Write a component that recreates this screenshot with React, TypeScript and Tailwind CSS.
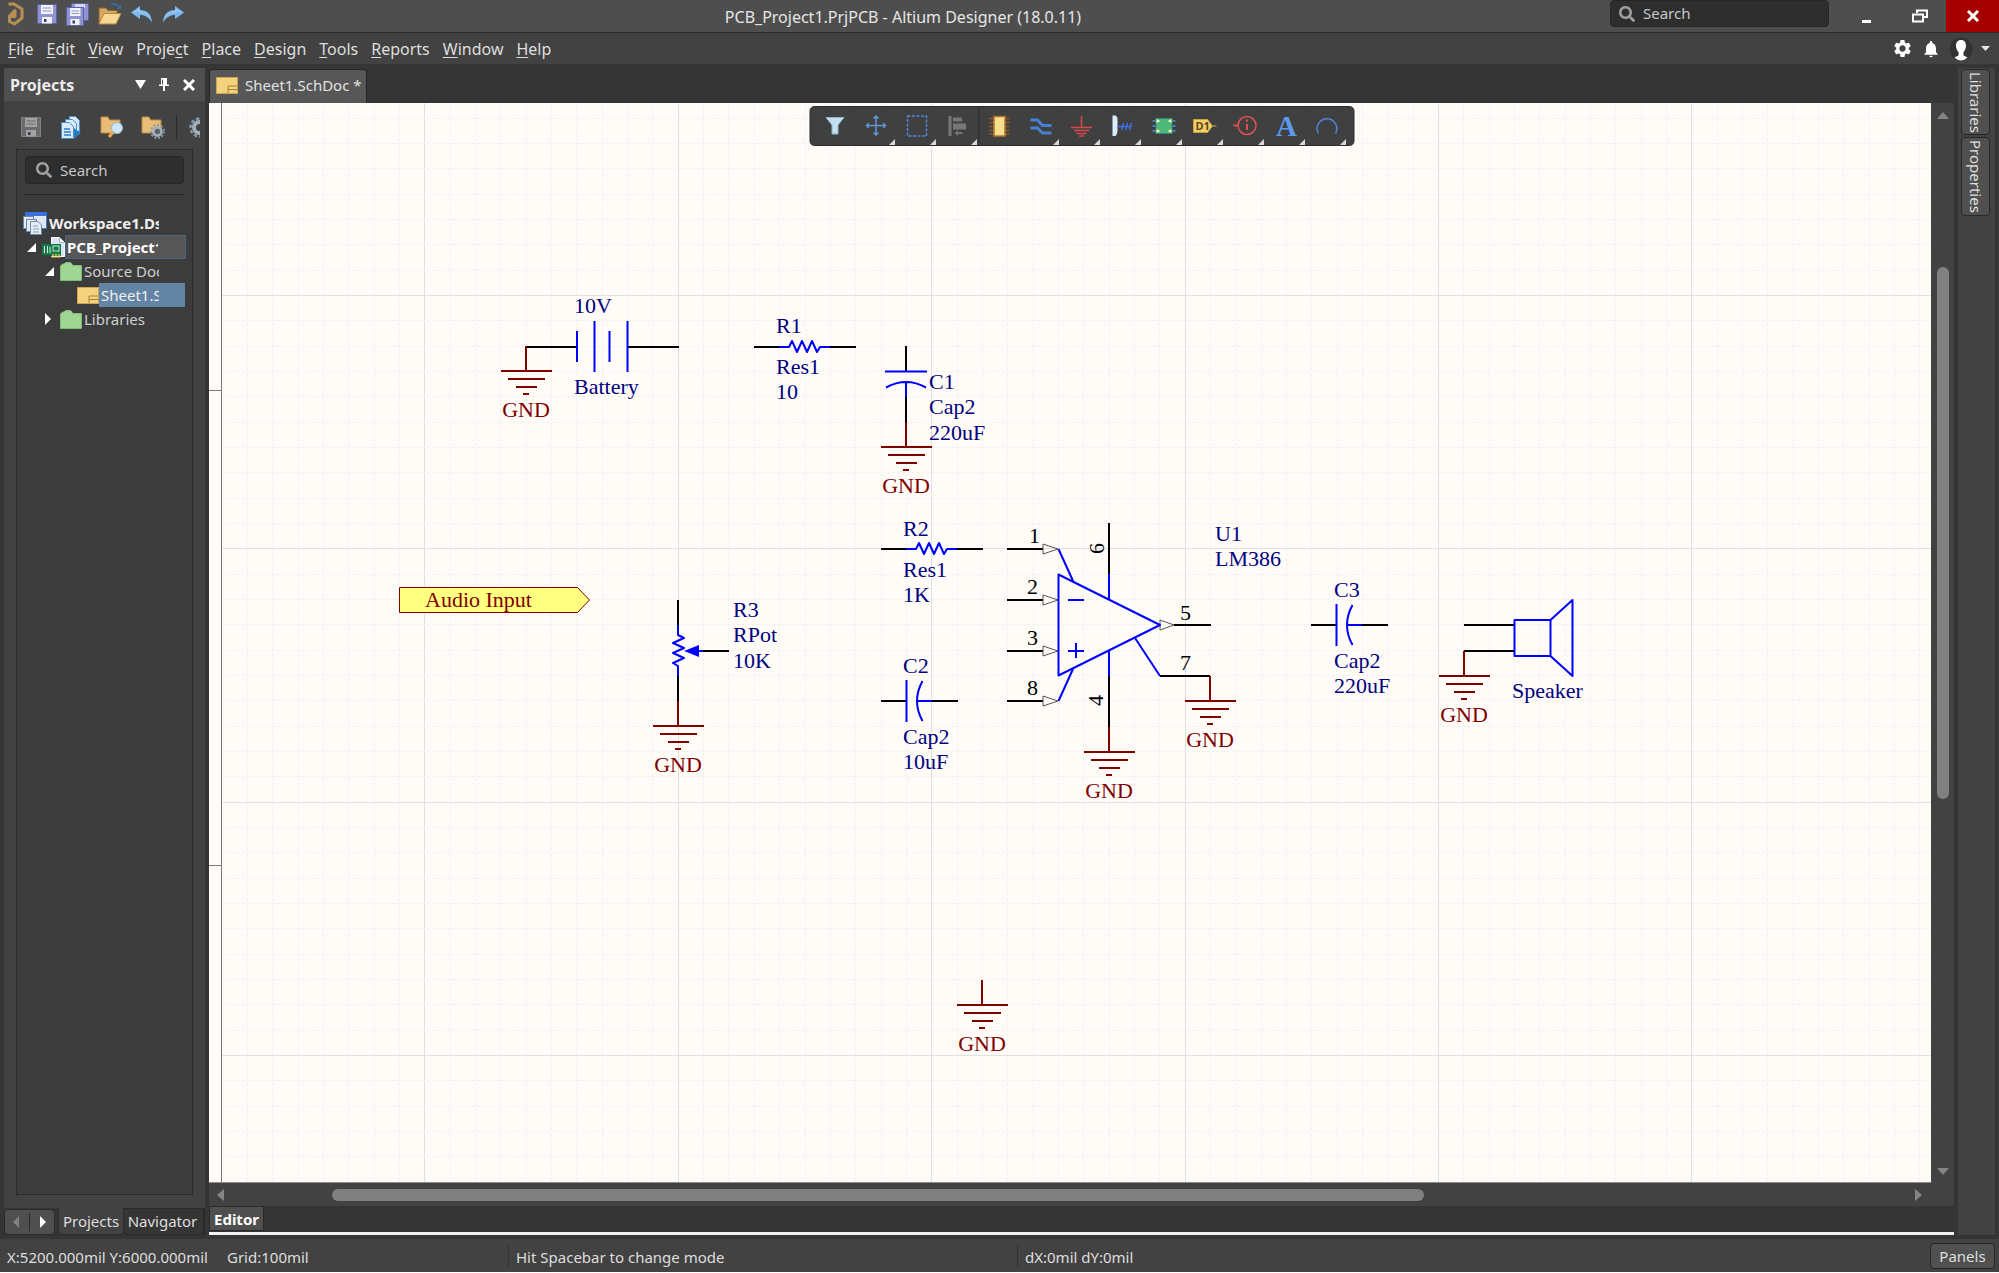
import React from "react";
import { FaSearch } from "react-icons/fa";
import { MdSettings, MdNotifications } from "react-icons/md";

const UNIT = 25.34;
const gx = (k: number) => 678.3 + UNIT * k;
const gy = (k: number) => 295.4 + UNIT * k;

const BLUE = "#0000ff";
const MAROON = "#800000";
const NAVY = "#000080";

/* ---------- small icons ---------- */

function AltiumLogo() {
  return (
    <svg width="16" height="24" viewBox="0 0 16 24" fill="none" stroke="#b78f54" strokeWidth="3">
      <path d="M0.5 2H6l8 5v9l-7.500 6L1.500 19.500V14L7 8.500v6H1.500" strokeLinejoin="round" />
    </svg>
  );
}

function Floppy({ light = "#f2f2fb", body = "#8f93cf", edge = "#5c62a8" }: { light?: string; body?: string; edge?: string }) {
  return (
    <svg width="20" height="20" viewBox="0 0 20 20">
      <rect x="0.5" y="0.5" width="19" height="19" fill={body} stroke={edge} />
      <rect x="4" y="1" width="12" height="9" fill={light} />
      <path d="M5.500 4h9M5.500 7h9" stroke={body} strokeWidth="1" />
      <rect x="5" y="13" width="10" height="6.5" fill={light} />
      <rect x="7" y="15" width="2.5" height="3" fill="#3d3d50" />
    </svg>
  );
}

function FloppyStack() {
  return (
    <svg width="23" height="23" viewBox="0 0 23 23">
      <rect x="5.5" y="0.5" width="17" height="17" fill="#8f93cf" stroke="#5c62a8" />
      <rect x="9" y="1" width="10" height="4" fill="#d5d7f2" />
      <rect x="0.5" y="4.5" width="17" height="18" fill="#8f93cf" stroke="#5c62a8" />
      <rect x="4" y="5" width="10.5" height="8" fill="#f2f2fb" />
      <path d="M5.500 8h7.500M5.500 10.500h7.500" stroke="#8f93cf" />
      <rect x="4.5" y="16" width="9" height="6" fill="#f2f2fb" />
      <rect x="6.5" y="17.5" width="2.5" height="3" fill="#3d3d50" />
    </svg>
  );
}

function OpenFolder() {
  return (
    <svg width="24" height="22" viewBox="0 0 24 22">
      <path d="M1 21V5h7l2 2.500h9V11" fill="#d9a860" stroke="#8a6430" />
      <path d="M1 21 6 10.500h17L18 21z" fill="#f7d894" stroke="#b58744" />
      <path d="M13 1.500c4-1 7 0 8.500 3.500" fill="none" stroke="#3c6f9e" strokeWidth="1.5" />
      <path d="M23 2v4h-4.500z" fill="#3c6f9e" />
    </svg>
  );
}

function CurvedArrow({ flip = false }: { flip?: boolean }) {
  return (
    <svg width="22" height="17" viewBox="0 0 22 17">
      <g transform={flip ? "matrix(-1 0 0 1 22 0)" : undefined}>
        <path d="M0 6.500 9 0v4c7 0 11.500 4 12 12.500C18 11.500 14 9 9 9v4z" fill="#7db7f0" />
        <path d="M3 6.500 8 3v3c5 0 9 2 11 5" fill="none" stroke="#a9d2fb" strokeWidth="1" />
      </g>
    </svg>
  );
}

function SheetIcon() {
  return (
    <svg className="shrink-0" width="22" height="17" viewBox="0 0 22 17">
      <rect x="0.5" y="0.5" width="21" height="16" fill="#f3d37d" stroke="#cfa450" />
      <path d="M12 16V9h9.500M12 12.500h9.500" fill="none" stroke="#a5823c" />
    </svg>
  );
}

function GreenFolder() {
  return (
    <svg className="shrink-0" width="22" height="19" viewBox="0 0 22 19">
      <path d="M0.5 18.500V4l2-2H4l1.500-1.500h5L13 3.500h8.500v15z" fill="#9fd694" stroke="#80bb78" />
    </svg>
  );
}

function WorkspaceIcon() {
  return (
    <svg className="shrink-0" width="24" height="24" viewBox="0 0 24 24">
      <rect x="2.5" y="1.5" width="21" height="16" fill="#dfe7f6" stroke="#4a73c8" />
      <rect x="2" y="1" width="22" height="4" fill="#3b6fe0" />
      <g fill="#e6ecf4" stroke="#6c87a8">
        <rect x="0.5" y="5.5" width="10" height="12" />
        <rect x="3.5" y="8.5" width="10" height="12" />
        <path d="M7.500 10.500H15l3.500 3.500v9.500h-11z" />
      </g>
      <path d="M10 15h5M10 18h6M10 21h6" stroke="#8ba3c4" />
    </svg>
  );
}

function PcbIcon() {
  return (
    <svg className="shrink-0" width="23" height="24" viewBox="0 0 23 24">
      <path d="M9.500 2.500h8l5 5v14h-13z" fill="#dde5f3" stroke="#f6f8fc" />
      <path d="M17.500 2.500v5h5" fill="#fff" stroke="#9fb2d4" />
      <path d="M0 9h19v12H9v-1H0z" fill="#127a48" />
      <path d="M2.500 11v7M5.500 11v7M8 12v6" stroke="#d8efe2" />
      <rect x="11" y="11" width="6" height="5" fill="none" stroke="#bfe6cf" />
      <path d="M11 19v4M14 19v4M17 19v4" stroke="#e8c04a" strokeWidth="1.5" />
    </svg>
  );
}

function DocsIcon() {
  return (
    <svg width="21" height="23" viewBox="0 0 21 23">
      <g fill="#dbeaf9" stroke="#4a90cc">
        <path d="M8.500 0.500h6l4 4v11h-10z" />
        <path d="M4.500 3.500h7l4 4v11h-11z" />
        <path d="M0.500 6.500h8l4 4v12h-12z" />
      </g>
      <path d="M3 13h6M3 16h7M3 19h7" stroke="#2f7fc4" strokeWidth="1.5" />
      <path d="m13 12 7 5-7 6z" fill="#2b7bc4" />
    </svg>
  );
}

function FolderSearch() {
  return (
    <svg width="24" height="22" viewBox="0 0 24 22">
      <path d="M1 17V1h7l1.500 3H20v13z" fill="#e9bd77" stroke="#b98a45" />
      <path d="m14 15-5 6" stroke="#e8a94f" strokeWidth="3" />
      <circle cx="17" cy="12" r="5.5" fill="#cfe6f5" stroke="#8fb8d4" />
    </svg>
  );
}

function FolderGear() {
  return (
    <svg width="24" height="23" viewBox="0 0 24 23">
      <path d="M1 17V1h7l1.500 3H20v13z" fill="#e9bd77" stroke="#b98a45" />
      <circle cx="16.5" cy="15.5" r="6.5" fill="none" stroke="#8c9aa5" strokeWidth="2" strokeDasharray="2 1.7" />
      <circle cx="16.5" cy="15.5" r="4" fill="#5d6468" stroke="#a5b3bd" strokeWidth="2.5" />
    </svg>
  );
}

function HalfGear() {
  return (
    <svg width="11" height="21" viewBox="0 0 11 21">
      <circle cx="10.5" cy="10.5" r="9" fill="none" stroke="#8796a1" strokeWidth="2.5" strokeDasharray="3.5 2" />
      <circle cx="10.5" cy="10.5" r="5.5" fill="#424242" stroke="#9fb0bb" strokeWidth="4" />
    </svg>
  );
}

/* ---------- top bars ---------- */

const iconBtn = "flex items-center justify-center";

function TitleBar() {
  return (
    <header className="flex h-[33px] shrink-0 border-b border-[#2a2a2a] bg-[#4e4e4e]">
      <div className="flex items-center gap-[9px] pb-1 pl-2">
        <button aria-label="Altium" className={iconBtn + " mr-1"}><AltiumLogo /></button>
        <button aria-label="Save" className={iconBtn}><Floppy /></button>
        <button aria-label="Save all" className={iconBtn}><FloppyStack /></button>
        <button aria-label="Open" className={iconBtn}><OpenFolder /></button>
        <button aria-label="Undo" className={iconBtn}><CurvedArrow /></button>
        <button aria-label="Redo" className={iconBtn}><CurvedArrow flip /></button>
      </div>
      <h1 className="flex-1 self-center pl-3 pt-0.5 text-center text-base leading-5 text-[#e6e6e6]">
        PCB_Project1.PrjPCB - Altium Designer (18.0.11)
      </h1>
      <div className="flex">
        <label className="flex h-[27px] w-[219px] items-center gap-2 rounded-[4px] border border-[#262626] bg-[#2e2e2e] pl-2">
          <FaSearch className="size-4 text-[#a0a0a0]" />
          <input aria-label="Search" placeholder="Search" className="w-36 bg-transparent text-[15px] text-[#dcdcdc] outline-none placeholder:text-[#c8c8c8]" />
        </label>
        <button aria-label="Minimize" className="ml-2.5 flex w-[54px] items-end justify-center pb-[9px]">
          <span className="h-[3px] w-[9px] bg-white" />
        </button>
        <button aria-label="Restore" className={iconBtn + " w-[53px]"}>
          <svg width="16" height="14" viewBox="0 0 16 14" fill="none" stroke="#fff" strokeWidth="2">
            <path d="M5 4V1.500h10V8h-4" />
            <rect x="1" y="5.5" width="10" height="7" />
          </svg>
        </button>
        <button aria-label="Close" className={iconBtn + " w-[53px] bg-[#a60000]"}>
          <svg width="12" height="12" viewBox="0 0 12 12" stroke="#fff" strokeWidth="3">
            <path d="m1 1 10 10M11 1 1 11" />
          </svg>
        </button>
      </div>
    </header>
  );
}

const MENUS: [string, string, string][] = [
  ["", "F", "ile"], ["", "E", "dit"], ["", "V", "iew"], ["Proje", "c", "t"], ["", "P", "lace"],
  ["", "D", "esign"], ["", "T", "ools"], ["", "R", "eports"], ["", "W", "indow"], ["", "H", "elp"],
];

function MenuBar() {
  return (
    <nav className="flex h-[31px] shrink-0 items-center justify-between bg-[#424242] pl-2 pr-[9px]">
      <div className="flex gap-[13px]">
        {MENUS.map(([a, k, b]) => (
          <button key={a + k + b} className="text-base leading-5 text-[#dedede]">
            {a}<u className="underline-offset-2">{k}</u>{b}
          </button>
        ))}
      </div>
      <div className="flex items-center gap-2 text-white">
        <button aria-label="Settings"><MdSettings className="size-[21px]" /></button>
        <button aria-label="Notifications"><MdNotifications className="size-5" /></button>
        <button aria-label="Account" className="flex items-center gap-2">
          <svg width="24" height="24" viewBox="0 0 24 24">
            <circle cx="12" cy="12" r="11.5" fill="#323232" />
            <path d="M12 3c3.500 0 5 2.500 5 5.500 0 3-1 5-2.500 6.500v3.500c1.500.8 3 1 4 2C16.500 22.500 14 23.500 12 23.500s-4.500-1-6.500-3c1-1 2.500-1.200 4-2V15C8 13.500 7 11.500 7 8.500 7 5.500 8.500 3 12 3z" fill="#fff" />
          </svg>
          <svg width="9" height="5" viewBox="0 0 9 5"><path d="M0 0h9L4.500 5z" fill="#e6e6e6" /></svg>
        </button>
      </div>
    </nav>
  );
}

/* ---------- projects panel ---------- */

function ProjectsPanel() {
  const clip = "block w-full overflow-hidden whitespace-nowrap";
  return (
    <aside className="flex w-[201px] shrink-0 flex-col">
      <div className="flex min-h-0 flex-1 flex-col bg-[#424242] pb-[13px]">
        <div className="flex h-[33px] shrink-0 items-center bg-[#4f4f4f] pl-1.5 pr-2.5">
          <h2 className="flex-1 text-base font-bold text-[#ececec]">Projects</h2>
          <button aria-label="Panel menu" className="mr-[13px]">
            <svg width="11" height="9" viewBox="0 0 11 9"><path d="M0 0h11L5.500 9z" fill="#fff" /></svg>
          </button>
          <button aria-label="Pin" className="mr-[14px]">
            <svg width="10" height="13" viewBox="0 0 10 13"><path d="M2 0h6v6.500h2V8H6v5H4V8H0V6.500h2z" fill="#fff" /><path d="M3.500 1.500v5" stroke="#4f4f4f" /></svg>
          </button>
          <button aria-label="Close panel">
            <svg width="12" height="12" viewBox="0 0 12 12" stroke="#fff" strokeWidth="3"><path d="m1 1 10 10M11 1 1 11" /></svg>
          </button>
        </div>
        <div className="flex h-12 shrink-0 items-center pl-[17px] pt-1">
          <button aria-label="Save document" className="mr-5"><Floppy light="#a3a3a3" body="#6b6b6b" edge="#808080" /></button>
          <button aria-label="Compile" className="mr-[18px]"><DocsIcon /></button>
          <button aria-label="Explore" className="mr-[17px]"><FolderSearch /></button>
          <button aria-label="Project options" className="mr-[11px]"><FolderGear /></button>
          <span className="mr-3 h-6 w-px bg-[#2c2c2c]" />
          <button aria-label="Settings"><HalfGear /></button>
        </div>
        <div className="ml-3 flex min-h-0 w-[177px] flex-1 flex-col border border-[#2a2a2a] bg-[#3c3c3c] px-2 pt-1.5">
          <label className="flex h-7 shrink-0 items-center gap-2 rounded-[4px] border border-[#262626] bg-[#2e2e2e] pl-2.5">
            <FaSearch className="size-4 text-[#a0a0a0]" />
            <input aria-label="Search projects" placeholder="Search" className="w-28 bg-transparent text-[15px] text-[#dcdcdc] outline-none placeholder:text-[#c8c8c8]" />
          </label>
          <div className="mt-2.5 h-px shrink-0 bg-[#262626]" />
          <ul className="-ml-0.5 mt-4 text-[15px] leading-6 text-[#cfcfcf]">
            <li className="flex h-6 items-center gap-0.5">
              <WorkspaceIcon />
              <span className="w-[110px]"><b className={clip + " text-[#f0f0f0]"}>Workspace1.DsnWrk</b></span>
            </li>
            <li className="flex h-6 items-center pl-1">
              <svg className="mr-1.5 shrink-0" width="9" height="9" viewBox="0 0 9 9"><path d="M9 0v9H0z" fill="#fff" /></svg>
              <PcbIcon />
              <span className="h-6 w-[121px] border border-[#4a6482] bg-[#575757] pl-px pr-[27px] leading-[22px]">
                <b className={clip + " text-white"}>PCB_Project1.PrjPCB</b>
              </span>
            </li>
            <li className="flex h-6 items-center pl-[22px]">
              <svg className="mr-1.5 shrink-0" width="9" height="9" viewBox="0 0 9 9"><path d="M9 0v9H0z" fill="#fff" /></svg>
              <GreenFolder />
              <span className="ml-0.5 w-[75px]"><span className={clip}>Source Documents</span></span>
            </li>
            <li className="flex h-6 items-center pl-[54px]">
              <SheetIcon />
              <span className="h-6 w-[86px] bg-[#6384a4] pl-0.5 pr-[26px] text-[#f0f0f0]"><span className={clip}>Sheet1.SchDoc</span></span>
            </li>
            <li className="flex h-6 items-center pl-[22px]">
              <svg className="mr-[9px] shrink-0" width="6" height="12" viewBox="0 0 6 12"><path d="m0 0 6 6-6 6z" fill="#fff" /></svg>
              <GreenFolder />
              <span className="ml-0.5 w-[75px]"><span className={clip}>Libraries</span></span>
            </li>
          </ul>
        </div>
      </div>
      <div className="flex h-[27px] shrink-0 items-start gap-[3px]">
        <div className="mt-px flex h-[26px] w-[51px] items-center justify-between rounded-[4px] border border-[#2a2a2a] bg-[#4f4f4f] px-2">
          <button aria-label="Previous tab"><svg width="6" height="12" viewBox="0 0 6 12"><path d="M6 0 0 6l6 6z" fill="#808080" /></svg></button>
          <span className="h-[18px] w-px bg-[#2a2a2a]" />
          <button aria-label="Next tab"><svg width="6" height="12" viewBox="0 0 6 12"><path d="m0 0 6 6-6 6z" fill="#fff" /></svg></button>
        </div>
        <div className="flex flex-1 border-r border-[#2a2a2a] text-[15px] text-[#dedede]">
          <button className="h-[27px] w-[66px] rounded-b-[4px] border border-t-0 border-[#2a2a2a] bg-[#424242]">Projects</button>
          <button className="h-[27px] flex-1 rounded-b-[4px] border border-l-0 border-[#2a2a2a] pr-0.5">Navigator</button>
        </div>
      </div>
    </aside>
  );
}

/* ---------- active bar ---------- */

const TOOLS: { name: string; menu: boolean; icon: React.ReactNode }[] = [
  { name: "Filter", menu: false, icon: <path d="M11.500 11.500h18l-6 7.500v9h-6v-9z" fill="#c3dff0" stroke="#8fb6cf" /> },
  {
    name: "Move", menu: true,
    icon: <path d="M20.500 10v19M11 19.500h19M18 12.500l2.500-2.500 2.500 2.500M18 26.500l2.500 2.500 2.500-2.500M13.500 17 11 19.500l2.500 2.500M27.500 17l2.500 2.500-2.500 2.500" stroke="#5f95d8" strokeWidth="1.5" />,
  },
  { name: "Select", menu: true, icon: <rect x="11" y="10" width="19" height="20" stroke="#4f86dc" strokeWidth="1.5" strokeDasharray="3 1.5" /> },
  {
    name: "Align", menu: true,
    icon: (
      <g fill="#777">
        <rect x="11" y="10" width="3" height="20" /><rect x="15.5" y="11.5" width="9" height="4" />
        <rect x="15.5" y="17.5" width="13" height="6" /><path d="m17 27 3.500-3v2h4.500v2h-4.500v2z" />
      </g>
    ),
  },
  {
    name: "Part", menu: false,
    icon: (
      <g>
        <path d="M10 12.500h20M10 16.500h20M10 20.500h20M10 24.500h20M10 28h20" stroke="#8f5a20" strokeWidth="1.5" />
        <rect x="14.5" y="10.5" width="11" height="19.5" fill="#f7dd8f" stroke="#b0762c" strokeWidth="1.5" />
      </g>
    ),
  },
  { name: "Wire", menu: true, icon: <path d="M11 14h7l5 5.500h9M11 22h7l5 5h9" stroke="#4680cf" strokeWidth="3" /> },
  { name: "Ground", menu: true, icon: <path d="M21 10v11M10.500 21.500h21M13.500 24.500h15M16 27.500h10M18.500 30h5" stroke="#d84a4a" strokeWidth="1.5" /> },
  {
    name: "Harness", menu: true,
    icon: (
      <g>
        <path d="M11 9.500h3c2 1 2 3 2 4.500v11c0 2-1 4-2 5h-3z" fill="#d9ecfb" />
        <path d="M16 20.500h14M20 24l2-7M24 24l2-7M28 24l2-7" stroke="#3c6fe0" strokeWidth="1.5" />
      </g>
    ),
  },
  {
    name: "Sheet symbol", menu: true,
    icon: (
      <g>
        <path d="M10 15h23M10 20h23M10 25h23" stroke="#4f8fd8" strokeWidth="1.5" />
        <rect x="13.5" y="12.5" width="16" height="15" fill="#4db878" stroke="#2d8a8a" />
        <path d="m14 13 4 2-4 2zM14 23l4 2-4 2zM29 13l-4 2 4 2zM29 23l-4 2 4 2z" fill="#fff6a0" />
      </g>
    ),
  },
  {
    name: "Port", menu: true,
    icon: (
      <g>
        <path d="M10 13.500h14l5 6.500-5 6.500h-14zM28 20h5" fill="#f5cf66" stroke="#c9a040" />
        <text x="12" y="24" fontSize="11" fontWeight="700" fontFamily="Noto Sans, sans-serif" fill="#5a4a20">D1</text>
      </g>
    ),
  },
  {
    name: "Directive", menu: true,
    icon: <g stroke="#e05050" strokeWidth="1.5"><circle cx="22.5" cy="19.5" r="9" /><path d="M9 19.500h5M22.500 18v6M22.500 13.500v2" strokeWidth="2" /></g>,
  },
  { name: "Text", menu: true, icon: <text x="21" y="30" textAnchor="middle" fontSize="29" fontWeight="700" fontFamily="Liberation Serif, serif" fill="#5a9aee">A</text> },
  { name: "Arc", menu: true, icon: <path d="M12 27.500a9.800 9.800 0 1 1 17 0" stroke="#4f86dc" strokeWidth="1.5" /> },
];

function ActiveBar() {
  return (
    <div className="absolute left-1/2 top-[3px] flex h-10 -translate-x-1/2 rounded-[5px] border border-[#2c2c2c] bg-[#404040] pl-1 pr-1.5">
      {TOOLS.map((t) => (
        <button key={t.name} aria-label={t.name} className={t.name === "Part" ? "border-l border-[#2a2a2a]" : ""}>
          <svg width={t.name === "Part" ? 40 : 41} height="38" viewBox={t.name === "Part" ? "0 1 40 38" : "0 1 41 38"} fill="none">
            {t.icon}
            {t.menu && <path d="M39.500 33v6h-6z" fill="#d8d8d8" />}
          </svg>
        </button>
      ))}
    </div>
  );
}

/* ---------- schematic ---------- */

function Label({ x, y, lines, color = NAVY }: { x: number; y: number; lines: string[]; color?: string }) {
  return (
    <g fill={color}>
      {lines.map((l, i) => (
        <text key={l} x={x} y={y + i * UNIT}>{l}</text>
      ))}
    </g>
  );
}

function Gnd({ x, y }: { x: number; y: number }) {
  return (
    <g>
      <path
        d={`M${x} ${y}v25M${x - 25} ${y + 25}h51M${x - 18} ${y + 33}h37M${x - 10} ${y + 41}h21M${x - 3} ${y + 48}h6`}
        stroke={MAROON}
        strokeWidth="2"
      />
      <text x={x} y={y + 71} textAnchor="middle" fill={MAROON}>GND</text>
    </g>
  );
}

function Resistor({ x, y, vertical = false }: { x: number; y: number; vertical?: boolean }) {
  return (
    <g transform={`translate(${x} ${y})${vertical ? " rotate(90)" : ""}`} strokeWidth="2">
      <path d="M0 0h25M76 0h26" stroke="#000" />
      <path d="M25 0h10l3-6 5 11 5-11 5 11 5-11 5 11 3-5h10" stroke={BLUE} strokeLinejoin="round" />
    </g>
  );
}

function Capacitor({ x, y, vertical = false }: { x: number; y: number; vertical?: boolean }) {
  return (
    <g transform={`translate(${x} ${y})${vertical ? " rotate(90)" : ""}`} strokeWidth="2">
      <path d="M0 0h25M51 0h26" stroke="#000" />
      <path d="M25.500-21v42M36 0h15M41.500-20q-11 20 0 40" stroke={BLUE} />
    </g>
  );
}

function Grid() {
  const cols = Array.from({ length: 90 }, (_, i) => i - 17);
  const rows = Array.from({ length: 60 }, (_, i) => i - 7);
  return (
    <g>
      {cols.map((k) => (
        <path key={"c" + k} d={`M${Math.floor(gx(k)) + 0.5} 103V2400`} stroke={k % 10 === 0 ? "#dee2de" : "#f1f1ee"} strokeDasharray={k % 10 === 0 ? undefined : "3 2"} />
      ))}
      {rows.map((k) => (
        <path key={"r" + k} d={`M222 ${Math.floor(gy(k)) + 0.5}H3000`} stroke={k % 10 === 0 ? "#dee2de" : "#f1f1ee"} strokeDasharray={k % 10 === 0 ? undefined : "3 2"} />
      ))}
    </g>
  );
}

function OpAmp() {
  const pins: [string, number][] = [["1", 549], ["2", 600], ["3", 651], ["8", 701]];
  return (
    <g>
      {pins.map(([n, y]) => (
        <g key={n}>
          <path d={`M1007 ${y}h36`} stroke="#000" strokeWidth="2" />
          <path d={`M1043 ${y - 5}v10l15-5z`} stroke="#555" />
          <text x={n === "1" ? 1029 : 1027} y={y - 6} fill="#000">{n}</text>
        </g>
      ))}
      <g stroke="#000" strokeWidth="2">
        <path d="M1109 523v51M1109 676v51M1174 625h37M1160 676h50" />
      </g>
      <path d="M1160 620v10l14-5z" stroke="#555" />
      <g stroke={BLUE} strokeWidth="2" strokeLinejoin="round">
        <path d="M1058.500 574.500v101L1160 625z" />
        <path d="M1058.500 549 1073.500 582M1058.500 701 1073 669M1109 574v26M1109 650v26M1135 638l25 38" />
        <path d="M1068 600h16M1068 651h16M1076 643v15" />
      </g>
      <g fill="#000">
        <text x="1180" y="620">5</text>
        <text x="1180" y="670">7</text>
        <text transform="translate(1104 554) rotate(-90)">6</text>
        <text transform="translate(1103 706) rotate(-90)">4</text>
      </g>
      <Label x={1215} y={541} lines={["U1", "LM386"]} />
    </g>
  );
}

function Schematic() {
  return (
    <svg className="block h-full w-full" fill="none" fontFamily="'Liberation Serif', 'Times New Roman', serif" fontSize="22" role="img" aria-label="Schematic sheet">
      <g transform="translate(-209 -103)">
        <Grid />
        <path d="M221.500 103V2400M209 390.500h13M209 865.500h13" stroke="#777" />

        <Label x={574} y={313} lines={["10V"]} />
        <path d="M526 347h51M628 347h51" stroke="#000" strokeWidth="2" />
        <path d="M577 331v31M594.500 321v51M609.500 331v31M627.500 321v51" stroke={BLUE} strokeWidth="2" />
        <Label x={574} y={394} lines={["Battery"]} />
        <Gnd x={526} y={346} />

        <Resistor x={754} y={347} />
        <Label x={776} y={333} lines={["R1"]} />
        <Label x={776} y={374} lines={["Res1", "10"]} />

        <Capacitor x={906} y={346} vertical />
        <Label x={929} y={389} lines={["C1", "Cap2", "220uF"]} />
        <Gnd x={906} y={422} />

        <Resistor x={881} y={549} />
        <Label x={903} y={536} lines={["R2"]} />
        <Label x={903} y={577} lines={["Res1", "1K"]} />

        <path d="M399.500 587.500H577.500l12 12.500-12 12.500H399.500z" fill="#ffff80" stroke={MAROON} />
        <Label x={425} y={607} lines={["Audio Input"]} color={MAROON} />

        <Resistor x={678} y={600} vertical />
        <path d="m684 651 15-6v12z" fill={BLUE} />
        <path d="M698 651h6" stroke={BLUE} strokeWidth="2" />
        <path d="M703 651h26" stroke="#000" strokeWidth="2" />
        <Label x={733} y={617} lines={["R3", "RPot", "10K"]} />
        <Gnd x={678} y={701} />

        <Capacitor x={881} y={701} />
        <Label x={903} y={673} lines={["C2"]} />
        <Label x={903} y={744} lines={["Cap2", "10uF"]} />

        <OpAmp />
        <Gnd x={1109} y={727} />
        <Gnd x={1210} y={676} />

        <Capacitor x={1311} y={625} />
        <Label x={1334} y={597} lines={["C3"]} />
        <Label x={1334} y={668} lines={["Cap2", "220uF"]} />

        <path d="M1464 625h50M1464 651h50" stroke="#000" strokeWidth="2" />
        <path d="M1514.500 620h36v36h-36zM1550.500 620l22-20v76l-22-20" stroke={BLUE} strokeWidth="2" strokeLinejoin="round" />
        <Label x={1512} y={698} lines={["Speaker"]} />
        <Gnd x={1464} y={651} />

        <Gnd x={982} y={980} />
      </g>
    </svg>
  );
}

/* ---------- editor ---------- */

function Tri({ dir }: { dir: "up" | "down" | "left" | "right" }) {
  const d = { up: "M0 7h12L6 0z", down: "M0 0h12L6 7z", left: "M7 0v12L0 6z", right: "M0 0v12l7-6z" }[dir];
  const flat = dir === "up" || dir === "down";
  return <svg width={flat ? 12 : 7} height={flat ? 7 : 12}><path d={d} fill="#858585" /></svg>;
}

function Editor() {
  return (
    <main className="ml-1 flex min-w-0 flex-1 flex-col">
      <div className="flex h-[35px] shrink-0 items-end">
        <button className="flex h-[34px] items-center gap-[7px] rounded-t-[4px] border border-b-0 border-[#262626] bg-[#575757] pb-0.5 pl-1.5 pr-1 text-[15px] text-[#e2e2e2]">
          <SheetIcon />
          <span className="whitespace-nowrap">Sheet1.SchDoc *</span>
        </button>
      </div>
      <div className="relative flex min-h-0 flex-1 flex-col">
        <div className="flex min-h-0 flex-1">
          <div className="min-w-0 flex-1 overflow-hidden border-b border-[#8a8f8a] bg-[#fffcf8]"><Schematic /></div>
          <div className="flex w-[23px] shrink-0 flex-col items-center justify-between bg-[#424242] pb-2 pt-[9px]">
            <button aria-label="Scroll up" className="flex"><Tri dir="up" /></button>
            <div className="flex w-3 flex-1 flex-col pt-[148px]">
              <div className="h-[59%] rounded-full bg-[#808080]" />
            </div>
            <button aria-label="Scroll down" className="flex"><Tri dir="down" /></button>
          </div>
        </div>
        <div className="flex h-[23px] shrink-0 items-center bg-[#424242] pl-2 pr-8">
          <button aria-label="Scroll left" className="flex"><Tri dir="left" /></button>
          <div className="flex-1 pl-[108px]">
            <div className="h-3 w-[69%] rounded-full bg-[#808080]" />
          </div>
          <button aria-label="Scroll right" className="flex"><Tri dir="right" /></button>
        </div>
        <ActiveBar />
      </div>
      <div className="flex h-[29px] shrink-0 items-start border-b-[3px] border-[#f2f2f2]">
        <button className="h-[25px] border border-[#2a2a2a] bg-[#4f4f4f] px-1 text-[15px] font-bold leading-[22px] text-white">Editor</button>
      </div>
    </main>
  );
}

function SideDock() {
  const tab = "flex w-[29px] items-center justify-center rounded-[4px] border border-[#282828] bg-[#505050] text-[15px] text-[#dedede] [writing-mode:vertical-rl]";
  return (
    <aside className="mx-1 flex w-[37px] shrink-0 flex-col gap-0.5 bg-[#424242] pl-[3px] pt-px">
      <button className={tab + " h-[66px]"}>Libraries</button>
      <button className={tab + " h-[79px]"}>Properties</button>
    </aside>
  );
}

function StatusBar() {
  return (
    <footer className="flex h-[33px] shrink-0 items-center bg-[#424242] pl-[7px] pr-1 text-[15px] leading-5 text-[#dedede]">
      <span className="w-[220px] whitespace-nowrap pt-0.5">X:5200.000mil Y:6000.000mil</span>
      <span className="w-[281px] pt-0.5">Grid:100mil</span>
      <span className="w-[509px] border-l border-[#333] pl-[7px] pt-0.5">Hit Spacebar to change mode</span>
      <span className="flex-1 border-l border-[#333] pl-[7px] pt-0.5">dX:0mil dY:0mil</span>
      <button className="h-[26px] w-[65px] rounded-[4px] border border-[#262626] bg-[#505050]">Panels</button>
    </footer>
  );
}

export default function App() {
  return (
    <div className="flex h-screen flex-col overflow-hidden bg-white pb-px font-['Noto_Sans',sans-serif]">
      <TitleBar />
      <MenuBar />
      <div className="flex min-h-0 flex-1 bg-[#353535] pb-1 pl-1 pt-1">
        <ProjectsPanel />
        <Editor />
        <SideDock />
      </div>
      <StatusBar />
    </div>
  );
}
